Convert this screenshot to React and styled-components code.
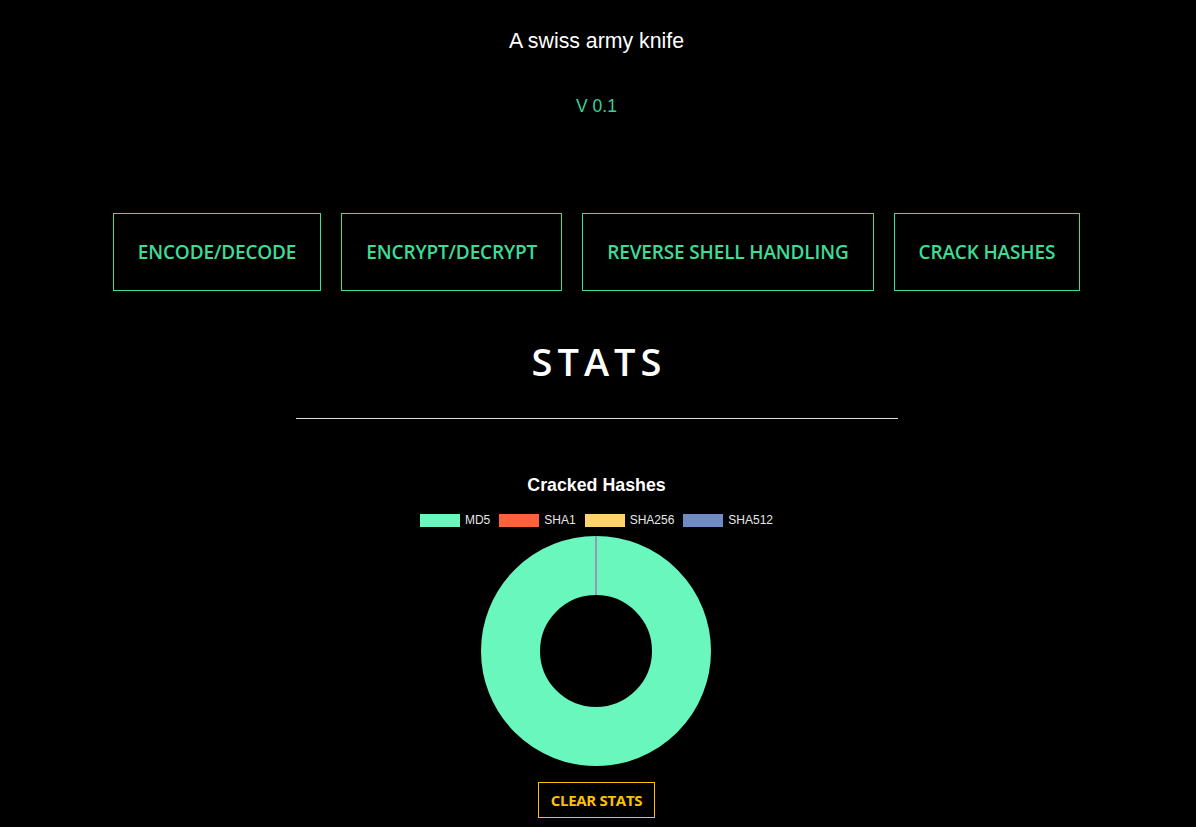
import React from "react";
import styled, { createGlobalStyle } from "styled-components";

const Global = createGlobalStyle`
  html, body { margin: 0; padding: 0; background: #000; }
  body { font-family: "Liberation Sans", Arial, sans-serif; color: #fff; }
`;

const Page = styled.div`
  display: flex;
  flex-direction: column;
  align-items: center;
  padding-top: 28px;
  padding-right: 3px;
  min-height: 827px;
  box-sizing: border-box;
`;

const Tagline = styled.div`
  font-size: 21.3px;
  line-height: 26px;
  color: #fff;
`;

const Version = styled.div`
  margin-top: 42px;
  font-size: 17.5px;
  line-height: 20px;
  color: #34d399;
`;

const Nav = styled.nav`
  display: flex;
  gap: 20px;
  margin-top: 97px;
`;

const NavButton = styled.button`
  background: transparent;
  border: 1px solid #3ddc97;
  color: #3ddc97;
  font-family: "Open Sans", sans-serif;
  font-weight: 600;
  font-size: 19px;
  height: 78px;
  padding: 0 24px;
  cursor: pointer;
  letter-spacing: -0.15px;
`;

const Heading = styled.h2`
  margin: 44px 0 0;
  font-family: "Open Sans", sans-serif;
  font-weight: 600;
  font-size: 38px;
  line-height: 52px;
  letter-spacing: 5px;
  padding-left: 5px;
  color: #fff;
`;

const Rule = styled.hr`
  width: 602px;
  border: none;
  border-top: 1px solid #ddd;
  margin: 31px 0 0;
`;

const Chart = styled.div`
  margin-top: 57px;
  display: flex;
  flex-direction: column;
  align-items: center;
`;

const ChartTitle = styled.div`
  font-weight: bold;
  font-size: 17.8px;
  line-height: 18px;
  color: #fff;
`;

const Legend = styled.div`
  display: flex;
  gap: 9px;
  margin-top: 19px;
`;

const LegendItem = styled.div`
  display: flex;
  align-items: center;
  gap: 5px;
  font-size: 12px;
  line-height: 14px;
  color: #e6e6e6;
`;

const Swatch = styled.span`
  width: 40px;
  height: 13px;
  background: ${(p) => p.$color};
`;

const Donut = styled.svg`
  display: block;
  margin-top: 8px;
`;

const ClearButton = styled.button`
  margin-top: 15px;
  background: transparent;
  border: 1px solid #ffc107;
  color: #ffc107;
  font-family: "Open Sans", sans-serif;
  font-weight: 700;
  font-size: 15px;
  height: 36px;
  padding: 0 12px;
  letter-spacing: -0.3px;
`;

const legend = [
  { label: "MD5", color: "#69f7be" },
  { label: "SHA1", color: "#ff6138" },
  { label: "SHA256", color: "#ffd56b" },
  { label: "SHA512", color: "#6e8bc4" },
];

export default function App() {
  return (
    <>
      <Global />
      <Page>
        <Tagline>A swiss army knife</Tagline>
        <Version>V 0.1</Version>
        <Nav>
          <NavButton>ENCODE/DECODE</NavButton>
          <NavButton>ENCRYPT/DECRYPT</NavButton>
          <NavButton>REVERSE SHELL HANDLING</NavButton>
          <NavButton>CRACK HASHES</NavButton>
        </Nav>
        <Heading>STATS</Heading>
        <Rule />
        <Chart>
          <ChartTitle>Cracked Hashes</ChartTitle>
          <Legend>
            {legend.map((l) => (
              <LegendItem key={l.label}>
                <Swatch $color={l.color} />
                {l.label}
              </LegendItem>
            ))}
          </Legend>
          <Donut width="232" height="232" viewBox="0 0 232 232">
            <circle cx="116" cy="116" r="85.5" fill="none" stroke="#69f7be" strokeWidth="59" />
            <line x1="116" y1="1" x2="116" y2="60" stroke="#9499b6" strokeWidth="2" />
          </Donut>
          <ClearButton>CLEAR STATS</ClearButton>
        </Chart>
      </Page>
    </>
  );
}
